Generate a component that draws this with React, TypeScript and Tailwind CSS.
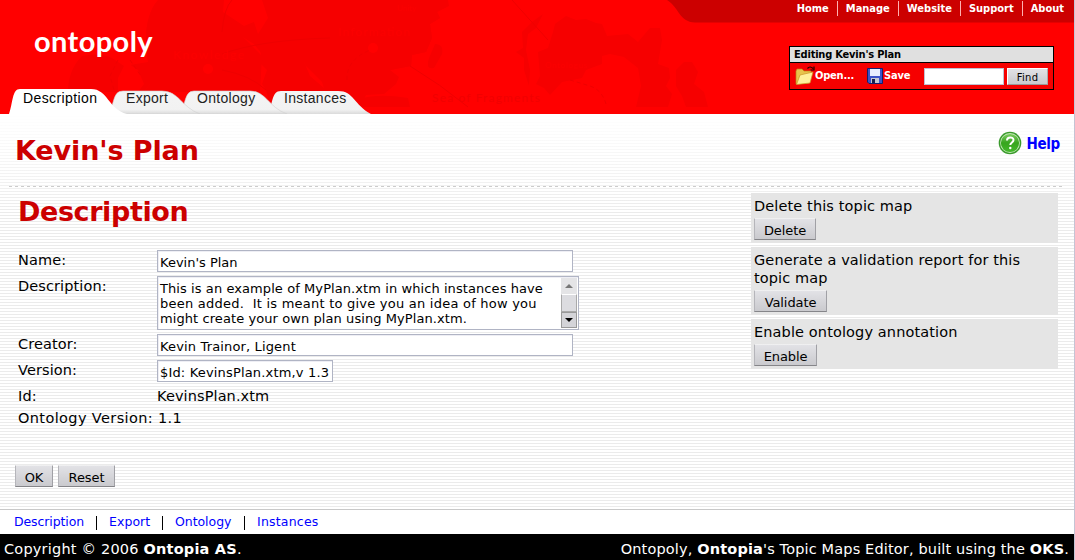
import React from "react";

const navItems = ["Home", "Manage", "Website", "Support", "About"];
const links = [
  { label: "Description", cls: "w-[70px] tracking-[-0.1px]" },
  { label: "Export", cls: "w-[41px] tracking-[0.05px]" },
  { label: "Ontology", cls: "w-[57px] tracking-[-0.05px]" },
  { label: "Instances", cls: "w-[62px] tracking-[0.2px]" },
];

const btn =
  "block h-[22px] whitespace-nowrap border border-t-white/70 border-l-[#b5b5ba] border-r-[#a0a0a5] border-b-[#858589] bg-linear-to-b from-[#e2e2e6] to-[#cacace] text-center text-[13px] leading-[23px] text-black tracking-[-0.1px]";
const field =
  "border border-[#b0b4c4] bg-white shadow-[inset_1px_1px_0_#eeeef4] pl-[2px] text-[13px] text-black whitespace-pre overflow-hidden";

function MapArt() {
  return (
    <svg className="absolute left-0 top-0" width="1074" height="114" viewBox="0 0 1074 114">
      <g fill="#f60000">
        <path d="M158 0H448L449 6L437 12L440 18L430 24L432 38L426 52L412 55L411 66L390 70L399 77L396 84L384 94L366 95L360 107H270L266 90L262 84L267 70L260 63L262 54L254 44L241 36L228 28L222 12L224 0H158Q146 14 146 40L150 64L153 74L150 84L144 92H68Q68 70 82 56Q100 52 112 58L124 66L148 62Q142 24 158 0Z" />
        <path d="M224 0H448V6L437 12L440 18L430 24L432 38L426 52L412 55L411 66L390 70L360 90H280L262 60L256 28L240 20Z" />
        <path d="M158 0H226L222 12L240 34L262 56L260 92H144L150 84L146 40Q146 14 158 0Z" />
        <path d="M360 99Q378 93 408 98L410 107H360ZM435 44Q444 44 442 54L434 68Q425 70 429 58Z" />
        <path d="M553 32L555 24L566 16L576 20L586 19L596 23L602 24L607 36L628 34L638 42L650 28H660L662 40L658 64L669 68L670 78L666 86L672 94L668 107H636L641 86L638 68L624 57L610 54L602 56V64L586 70L582 78L562 82L550 95L544 88L536 84L540 76L538 52L548 48Z" />
        <path d="M684 62H692L698 72L694 84L704 92L708 107H686L682 96L676 86L676 70Z" />
        <path d="M543 14L532 22L522 32L523 48L516 52L524 58V70L529 86L530 70L526 50L528 34L536 28Z" />
      </g>
      <g fill="#ff0000">
        <path d="M224 0L223 12L244 26L254 22L258 34L268 18L262 0ZM300 52L306 66L322 82L324 88L310 76Z" />
        <circle cx="208" cy="69" r="5" />
        <circle cx="373" cy="48" r="5" />
        <path d="M118 78L126 62L138 70L144 84L138 92H118Z" />
      </g>
      <g fill="none" stroke="#ef0000" strokeWidth="1">
        <path d="M222 32Q224 8 232 0M222 54Q260 40 330 38M222 70Q250 75 266 90M410 66Q440 84 468 107M512 0L548 40" />
        <path d="M118 60L110 76L114 90M130 60L141 76M347 80Q346 60 370 50M570 80L590 86Q602 90 606 104" strokeDasharray="4 3" />
      </g>
      <g fontFamily="Lato, sans-serif" fontSize="12">
        <text x="432" y="102" textLength="108" fill="#f10000">Sea of Fragments</text>
        <text x="173" y="59" textLength="71" fill="#fc0000">Knowledge</text>
        <text x="338" y="36" textLength="72" fill="#fc0000">Information</text>
        <text x="545" y="68" fontSize="8" textLength="42" fill="#fc0000">Ontologus</text>
        <text x="397" y="11" fontSize="8" textLength="19" fill="#fc0000">Unity</text>
      </g>
      <path d="M667 0C679 7 679 22 695 22.500H1074V0Z" fill="#cc0000" />
    </svg>
  );
}

function TabShapes() {
  return (
    <svg className="absolute left-0 top-[86px]" width="380" height="28" viewBox="0 86 380 28">
      <defs>
        <linearGradient id="tab" x1="0" y1="0" x2="0" y2="1">
          <stop offset="0" stopColor="#f4f4f4" />
          <stop offset="0.8" stopColor="#f2f2f2" />
          <stop offset="1" stopColor="#dadada" />
        </linearGradient>
      </defs>
      <path d="M268 114C273 105 271 91 281 91H338C354 91 354 105 371 114Z" fill="url(#tab)" />
      <path d="M180 114C186 105 184 91 194 91H250C266 91 268 107 287 114Z" fill="url(#tab)" stroke="#d0d0d0" strokeWidth=".6" />
      <path d="M108 114C115 105 112 91 123 91H162C179 91 181 107 200 114Z" fill="url(#tab)" stroke="#d0d0d0" strokeWidth=".6" />
      <path d="M9 114C13 103 12 89 20 89H91C108 89 108 109 127 114Z" fill="#fff" />
    </svg>
  );
}

function FolderIcon() {
  return (
    <svg width="20" height="20" viewBox="0 0 20 20" className="shrink-0">
      <path d="M1 18V5L2 3H7L9 5H16V9L14 17Z" fill="#e8c34c" stroke="#b98517" strokeWidth=".7" />
      <path d="M1.500 18.500L5 9L18 6L15 17Z" fill="#fff09c" stroke="#c99626" strokeWidth=".7" />
      <path d="M12.500 2.500Q15 -.5 18 2.500M19 .5V4H15.500" fill="none" stroke="#200" strokeWidth="1.200" />
    </svg>
  );
}

function SaveIcon() {
  return (
    <svg width="16" height="16" viewBox="0 0 16 16" className="shrink-0">
      <path d="M.5.500H15.500V15.500H2L.5 14Z" fill="#3c55c8" stroke="#14206e" />
      <path d="M3 1H13V8H3Z" fill="#e8efff" />
      <path d="M4 10H12V15H4Z" fill="#c5c9d4" />
      <path d="M5 11H8V15H5Z" fill="#18204c" />
    </svg>
  );
}

function HelpIcon() {
  return (
    <svg width="24" height="24" viewBox="0 0 24 24" className="shrink-0">
      <defs>
        <linearGradient id="help" x1="0" y1="0" x2="0" y2="1">
          <stop offset="0" stopColor="#7ccb60" />
          <stop offset="0.5" stopColor="#37a51e" />
          <stop offset="1" stopColor="#43b82a" />
        </linearGradient>
      </defs>
      <circle cx="12" cy="12" r="11.300" fill="#3a9a2c" />
      <circle cx="12" cy="12" r="9.900" fill="#c4e8b8" />
      <circle cx="12" cy="12" r="9.100" fill="url(#help)" />
      <path d="M9 9.500C9 5.500 15.500 5.500 15.500 9C15.500 11.500 12.300 11.500 12.300 14" fill="none" stroke="#fff" strokeWidth="2" />
      <circle cx="12.300" cy="17" r="1.200" fill="#fff" />
    </svg>
  );
}

function Header() {
  return (
    <header className="relative h-[114px] overflow-hidden bg-[#ff0000]">
      <MapArt />
      <TabShapes />
      <div className="relative flex h-[114px] justify-between">
        <div className="flex flex-col">
          <div className="h-[89px] pl-[34px] pt-[24px] font-['Lato'] text-[29px] font-bold leading-[34px] tracking-[0.4px] text-white">
            <span>ontopoly</span>
          </div>
          <nav className="flex font-['Liberation_Sans'] text-[14px] leading-[18px] tracking-[0.3px] text-[#222]">
            <span className="ml-[23px] w-[103px] tracking-[0.4px] text-black">Description</span>
            <span className="w-[71px]">Export</span>
            <span className="w-[87px]">Ontology</span>
            <span>Instances</span>
          </nav>
        </div>
        <div className="flex flex-col items-end">
          <nav className="flex pr-[10px] pt-px font-['DejaVu_Sans_Condensed','DejaVu_Sans'] text-[11px] font-bold leading-[15px] text-white">
            {navItems.map((n, i) => (
              <span key={n} className={i ? "ml-[8px] border-l border-[#ffb0b0] pl-[8px]" : ""}>{n}</span>
            ))}
          </nav>
          <div className="mr-[20px] mt-[30px] w-[265px] border border-black">
            <div className="h-[15px] bg-[#e0e0e0] pl-[4px] font-['DejaVu_Sans_Condensed','DejaVu_Sans'] text-[11px] font-bold leading-[15px] tracking-[-0.2px] text-black">
              Editing Kevin's Plan
            </div>
            <div className="flex h-[27px] items-center border-t border-black bg-[#f60000] pl-[5px] font-['DejaVu_Sans_Condensed','DejaVu_Sans'] text-[11px] font-bold tracking-[-0.2px] text-white">
              <FolderIcon />
              <span className="w-[52px] pb-px pt-[2px]">Open...</span>
              <SaveIcon />
              <span className="w-[41px] pb-px pl-px pt-[2px]">Save</span>
              <span className="h-[17px] w-[80px] border border-[#c0c0d0] bg-white" />
              <span className="ml-[3px] h-[17px] w-[41px] border border-t-white border-l-white border-r-[#aaa] border-b-[#999] bg-linear-to-b from-[#e2e2e6] to-[#cacace] text-center font-['DejaVu_Sans'] text-[10px] font-normal leading-[18px] tracking-[0.3px] text-black">Find</span>
            </div>
          </div>
        </div>
      </div>
    </header>
  );
}

const h1 = "font-['DejaVu_Sans'] text-[27px] font-bold leading-[32px] text-[#cc0000]";

function Row({ label, cls, children }: { label: string; cls: string; children: React.ReactNode }) {
  return (
    <div className={"flex " + cls}>
      <span className="w-[139px] shrink-0 whitespace-nowrap leading-[20px]">{label}</span>
      {children}
    </div>
  );
}

export default function App() {
  return (
    <div className="h-[560px] w-[1075px] overflow-hidden border-r border-[#c4c4d4] bg-white font-['DejaVu_Sans',sans-serif] text-black">
      <Header />
      <main className="flex h-[396px] flex-col border-b border-[#c8c8c8] bg-[linear-gradient(to_bottom,#fff,transparent_100px),repeating-linear-gradient(to_bottom,#fff_0_2px,#ebebeb_2px_3px)]">
        <div className="mx-[9px] flex h-[72px] shrink-0 justify-between pl-[6px] pr-[5px]">
          <h1 className={h1 + " pt-[21px] tracking-[-0.1px]"}>Kevin's Plan</h1>
          <div className="flex pt-[17px] font-['DejaVu_Sans_Condensed','DejaVu_Sans'] text-[15px] font-bold leading-[26px] tracking-[-0.3px] text-[#0000ff]">
            <HelpIcon />
            <span className="ml-[4px]">Help</span>
          </div>
        </div>
        <div className="mx-[9px] h-px shrink-0 bg-[repeating-linear-gradient(to_right,#ccc_0_3px,#fff_3px_6px)]" />
        <div className="flex justify-between pr-[16px]">
          <div className="flex flex-col pl-[18px] text-[14.500px] tracking-[0.1px]">
            <h2 className={h1 + " mt-[9px] h-[54px] tracking-[-0.4px]"}>Description</h2>
            <Row label="Name:" cls="h-[26px]"><div className={field + " h-[22px] w-[416px] leading-[24px] tracking-normal"}>Kevin's Plan</div></Row>
            <Row label="Description:" cls="h-[58px]">
              <div className={field + " flex h-[54px] w-[422px] justify-between pr-px"}>
                <p className="pt-[4px] leading-[15px] tracking-[0.08px]">
                  {"This is an example of MyPlan.xtm in which instances have\n"}
                  <span className="tracking-[0.23px]">{"been added.  It is meant to give you an idea of how you\n"}</span>
                  {"might create your own plan using MyPlan.xtm."}
                </p>
                <div className="mt-px flex w-[16px] flex-col">
                  <span className="flex h-[16px] items-center justify-center bg-[#e4e4e6]"><svg width="8" height="4"><path d="M0 4L4 0L8 4Z" fill="#777" /></svg></span>
                  <span className="h-[18px] border border-[#aaa] border-t-white bg-[#dcdce0]" />
                  <span className="flex h-[16px] items-center justify-center border border-[#999] bg-[#d4d4d8]"><svg width="8" height="4"><path d="M0 0H8L4 4Z" fill="#000" /></svg></span>
                </div>
              </div>
            </Row>
            <Row label="Creator:" cls="h-[26px]"><div className={field + " h-[22px] w-[416px] leading-[24px] tracking-[0.15px]"}>Kevin Trainor, Ligent</div></Row>
            <Row label="Version:" cls="h-[26px]"><div className={field + " h-[22px] w-[176px] leading-[24px] tracking-[0.17px]"}>$Id: KevinsPlan.xtm,v 1.3</div></Row>
            <Row label="Id:" cls="h-[22px]"><span className="leading-[20px]">KevinsPlan.xtm</span></Row>
            <Row label="Ontology Version:" cls="h-[22px] tracking-[0.38px]"><span className="pl-px leading-[20px]">1.1</span></Row>
            <div className="-ml-[3px] mt-[35px] flex gap-[5px]">
              <button className={btn + " w-[38px]"}>OK</button>
              <button className={btn + " w-[57px]"}>Reset</button>
            </div>
          </div>
          <aside className="mt-[6px] flex w-[307px] flex-col gap-[4px] text-[14.500px] leading-[18px] tracking-[0.12px]">
            <div className="h-[50px] bg-[#e5e5e5] pl-[3px] pt-[4px]"><p>Delete this topic map</p><button className={btn + " mt-[3px] w-[62px]"}>Delete</button></div>
            <div className="h-[68px] bg-[#e5e5e5] pl-[3px] pt-[4px]"><p>Generate a validation report for this<br />topic map</p><button className={btn + " mt-[3px] w-[73px]"}>Validate</button></div>
            <div className="h-[50px] bg-[#e5e5e5] pl-[3px] pt-[4px]"><p>Enable ontology annotation</p><button className={btn + " mt-[3px] w-[63px]"}>Enable</button></div>
          </aside>
        </div>
      </main>
      <nav className="flex h-[24px] items-center pl-[14px] pt-px text-[12.500px] text-[#0000ff]">
        {links.map((l, i) => (
          <React.Fragment key={l.label}>
            {i > 0 && <span className="mx-[12px] h-[14px] w-px bg-black" />}
            <span className={l.cls + " whitespace-nowrap"}>{l.label}</span>
          </React.Fragment>
        ))}
      </nav>
      <footer className="flex h-[26px] justify-between whitespace-nowrap bg-black pl-[4px] pr-[5px] text-[14.500px] leading-[30px] text-white">
        <span className="tracking-[0.2px]">Copyright © 2006 <b>Ontopia AS</b>.</span>
        <span className="tracking-[0.15px]">Ontopoly, <b>Ontopia</b>'s Topic Maps Editor, built using the <b>OKS</b>.</span>
      </footer>
    </div>
  );
}
